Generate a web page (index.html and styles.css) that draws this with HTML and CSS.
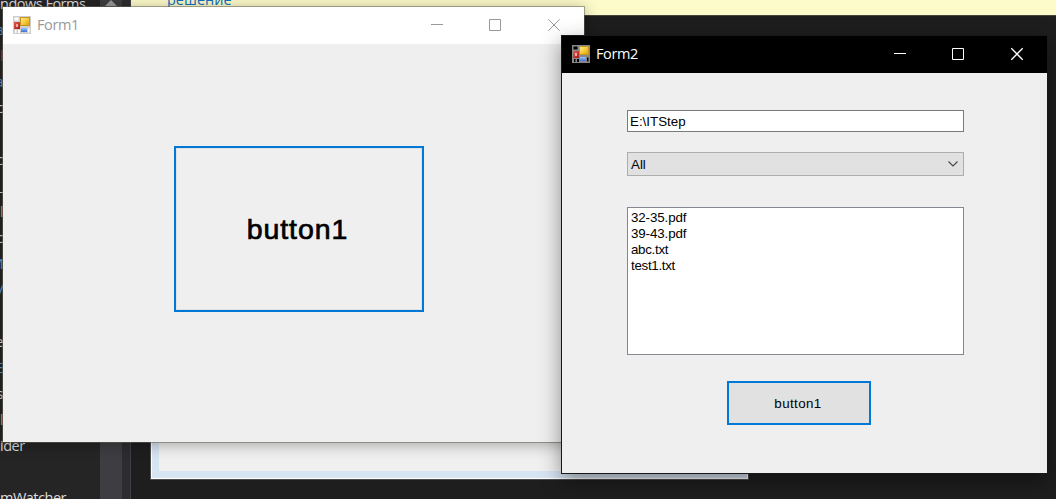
FILE: index.html
```html
<!DOCTYPE html>
<html lang="ru">
<head>
<meta charset="utf-8">
<title>Form2</title>
<link rel="stylesheet" href="styles.css">
</head>
<body>
<svg width="0" height="0" class="defs">
  <defs>
    <linearGradient id="gold" x1="0" y1="0" x2="1" y2="1"><stop offset="0" stop-color="#fff0a0"/><stop offset=".5" stop-color="#f8cb3c"/><stop offset="1" stop-color="#dc9c08"/></linearGradient>
    <linearGradient id="blue" x1="0" y1="0" x2="0" y2="1"><stop offset="0" stop-color="#9cc4fa"/><stop offset="1" stop-color="#3b72d8"/></linearGradient>
    <linearGradient id="red" x1="0" y1="0" x2="1" y2="1"><stop offset="0" stop-color="#e06050"/><stop offset="1" stop-color="#a81818"/></linearGradient>
    <g id="app">
      <rect x="1" y="6" width="6" height="7" fill="url(#red)"/><rect x="3" y="8" width="2" height="3" fill="#f4aaa0"/>
      <rect x="7.5" y="1.5" width="9" height="8" fill="url(#gold)" stroke="#c49322"/>
      <rect x="8" y="12" width="6" height="4" fill="url(#blue)"/>
    </g>
  </defs>
</svg>
<div class="desktop">
  <aside class="sidebar">
    <ul class="toc">
      <li>ndows Forms</li><li class="s blue">в</li><li class="s red">l</li><li class="s blue">а</li><li class="s">c</li><li></li><li class="s">c</li><li class="s">_</li><li class="s gold">l</li><li class="s">c</li><li class="s blue">M</li><li class="s blue">V</li><li></li><li class="s">e</li><li class="s blue">E</li><li class="s">s</li><li class="s gold">l</li><li>ider</li><li></li><li>mWatcher</li>
    </ul>
    <div class="scroll"><i class="up"></i></div>
    <div class="gutter"></div>
  </aside>
  <main class="editor"><div class="notice">решение</div></main>

  <div class="window designer"></div>

  <section class="window form1">
    <header class="title">
      <svg class="icon" viewBox="0 0 18 18"><rect width="18" height="18" fill="#cfcfcf"/><path d="M1.500 1.500h4v3h-4zM2 14h1.500v3H2zM5 14h2v3H5zM15 12.500h1.500v4H15z" fill="#fff"/><use href="#app"/></svg>
      <span class="name">Form1</span>
      <svg class="controls" viewBox="0 0 130 12"><path d="M0 5.500h12M58.500.500h11v11h-11z"/><path d="M117.300.300l11.400 11.400M128.700.300L117.300 11.700"/></svg>
    </header>
    <div class="client"><button class="big">button1</button></div>
  </section>

  <section class="window form2">
    <header class="title">
      <svg class="icon" viewBox="0 0 18 18"><rect width="18" height="18" fill="#888"/><path d="M1.500 1.500h4v3h-4zM2 14h1.500v3H2zM5 14h2v3H5zM15 12.500h1.500v4H15z" fill="#000"/><use href="#app"/></svg>
      <span class="name">Form2</span>
      <svg class="controls" viewBox="0 0 130 12"><path d="M0 5.500h12M58.500.500h11v11h-11z"/><path class="cross" d="M117.300.300l11.400 11.400M128.700.300L117.300 11.700"/></svg>
    </header>
    <div class="client">
      <div class="field">E:\ITStep</div>
      <div class="combo"><span>All</span><svg viewBox="0 0 10 6"><path d="M.5.500L5 5 9.500.500"/></svg></div>
      <ul class="files"><li>32-35.pdf</li><li>39-43.pdf</li><li class="tight">abc.txt</li><li class="tight">test1.txt</li></ul>
      <button class="small">button1</button>
    </div>
  </section>
</div>
</body>
</html>
```

FILE: styles.css
```css
* { box-sizing: border-box; }
body { margin: 0; overflow: hidden; background: #1e1e1e; }
ul { margin: 0; padding: 0; list-style: none; }
.defs { display: block; }
.desktop { position: relative; display: flex; width: 1056px; height: 499px; overflow: hidden; font-family: "Open Sans", "Noto Sans", sans-serif; }

.sidebar { display: flex; width: 131px; background: #252526; }
.toc { width: 100px; margin-top: -9px; color: #dcdcdc; font: 14.5px/26px "Open Sans", sans-serif; letter-spacing: -0.5px; white-space: nowrap; }
.toc li { height: 26px; }
.toc .s { width: 3px; overflow: hidden; direction: rtl; }
.toc .blue { color: #569cd6; }
.toc .red { color: #b03038; }
.toc .gold { color: #d69d50; }
.scroll { width: 22px; background: #3e3e42; }
.up { display: block; width: 0; margin-left: 5px; border: 6px solid transparent; border-top: 0; border-bottom-color: #999; }
.gutter { width: 9px; background: #2d2d30; border-right: 1px solid #3f3f46; }
.editor { flex: 1; background: #1e1e1e; }
.notice { height: 16px; padding-left: 36px; background: #fdfbc9; border-bottom: 1px solid #45453d; color: #0e70c0; font-size: 14.5px; line-height: 0; }

.window { position: absolute; }
.designer { left: 150px; top: 380px; width: 599px; height: 100px; border: 1px solid #4d4d50; background: #f0f0f0; box-shadow: inset 0 0 0 1px #fff, inset 0 0 0 8px #d7e4f2; }
.form1 { left: 2px; top: 6px; width: 583px; height: 437px; border: 1px solid rgba(100,100,85,.55); background: #efefef; background-clip: padding-box; box-shadow: 0 2px 14px rgba(0,0,0,.3); }
.form2 { left: 561px; top: 35px; width: 486px; height: 439px; border: 1px solid #181818; border-right: 0; background: #efefef; box-shadow: 0 7px 20px rgba(0,0,0,.42); }
.title { display: flex; align-items: flex-start; height: 37px; padding: 0 23px 0 10px; background: #fff; color: #999; font-size: 14.5px; }
.icon { width: 18px; height: 18px; margin-top: 9px; }
.name { margin: 8px 0 0 6px; line-height: 20px; letter-spacing: -0.4px; }
.controls { width: 130px; height: 12px; margin: 12px 0 0 auto; overflow: visible; fill: none; stroke: #999; stroke-width: 1; }
.form2 .title { background: #000; color: #fff; }
.form2 .controls { stroke: #fff; }
.cross { stroke-width: 1.3; }

button { padding: 0; border: 2px solid #0078d7; color: #000; font-family: "Liberation Sans", Arial, sans-serif; }
.form1 .client { padding: 102px 0 0 171px; }
.big { display: block; width: 250px; height: 166px; padding-right: 3px; background: #efefef; box-shadow: inset 0 0 0 1px #e1e1e1; font-size: 28.5px; -webkit-text-stroke: .7px #000; letter-spacing: .9px; }
.form2 .client { display: flex; flex-direction: column; padding: 37px 83px 0 65px; font: 13.33px/16px "Liberation Sans", Arial, sans-serif; color: #000; }
.field { height: 22px; padding: 3px 2px; background: #fff; border: 1px solid #7a7a7a; }
.combo { display: flex; align-items: center; justify-content: space-between; height: 24px; margin-top: 20px; padding: 0 5px 0 3px; background: #e1e1e1; border: 1px solid #adadad; }
.combo span { padding-top: 1px; }
.combo svg { width: 10px; height: 6px; fill: none; stroke: #444; stroke-width: 1.1; }
.files { height: 148px; margin-top: 31px; padding: 2px 3px; background: #fff; border: 1px solid #828790; letter-spacing: -.1px; }
.tight { letter-spacing: -.3px; }
.small { width: 144px; height: 44px; margin: 26px 0 0 100px; padding-right: 2px; background: #e1e1e1; font-size: 13.33px; letter-spacing: .4px; }
```
